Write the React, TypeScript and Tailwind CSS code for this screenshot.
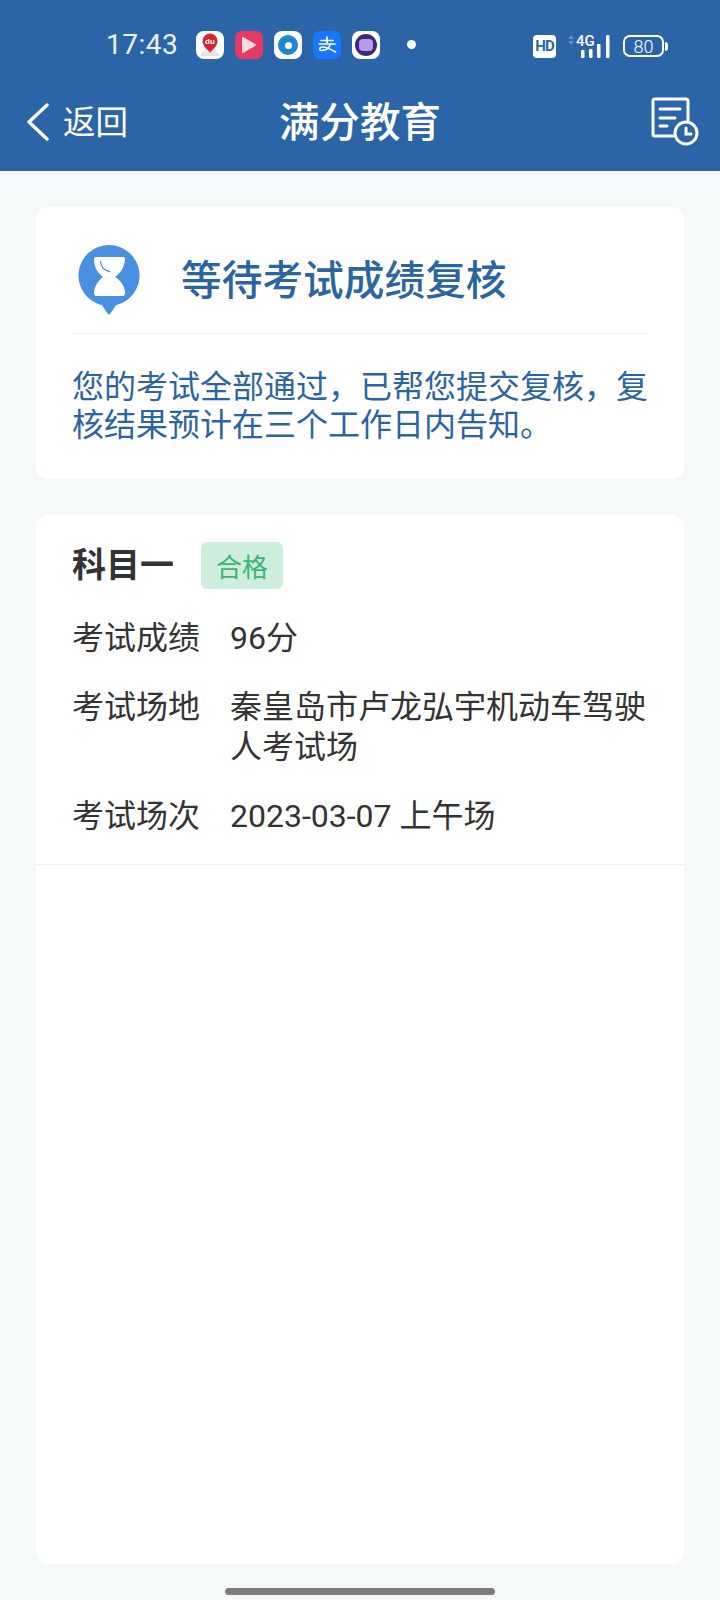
import type { ReactNode } from "react";

const font = "font-['Roboto','Noto_Sans_CJK_SC','Noto_Sans',sans-serif]";

function AppBadges() {
  return (
    <div className="flex items-center gap-[11px]">
      {/* 百度地图 */}
      <span className="flex h-[28px] w-[28px] items-center justify-center rounded-[8px] bg-white">
        <svg width="26" height="26" viewBox="0 0 26 26">
          <path d="M3 24 L10 15 L16 15 L23 24 Z" fill="#dfe6ee" />
          <path d="M13 21c-1-3-7.500-6-7.500-12a7.500 7.500 0 0 1 15 0c0 6-6.500 9-7.500 12z" fill="#d9232e" />
          <text x="13" y="12" fontSize="8" fontWeight="700" fill="#fff" textAnchor="middle" fontFamily="Liberation Sans">du</text>
        </svg>
      </span>
      {/* 视频 */}
      <span className="flex h-[28px] w-[28px] items-center justify-center rounded-[7px] bg-[#e63a62]">
        <svg width="16" height="18" viewBox="0 0 16 18">
          <path d="M2 2 L14 9 L2 16 Z" fill="#fbdbe2" stroke="#fbdbe2" strokeWidth="2" strokeLinejoin="round" />
        </svg>
      </span>
      <span className="flex h-[28px] w-[28px] items-center justify-center rounded-[8px] bg-white">
        <span className="flex h-[20px] w-[20px] items-center justify-center rounded-full bg-[#1f86cf]">
          <span className="h-[7px] w-[7px] rounded-full bg-white" />
        </span>
      </span>
      {/* 支付宝 */}
      <span className="flex h-[28px] w-[28px] items-center justify-center rounded-[7px] bg-[#1677ff]">
        <svg width="24" height="24" viewBox="0 0 24 24" fill="none" stroke="#fff" strokeWidth="1.7" strokeLinecap="round">
          <path d="M6 7.500h12" />
          <path d="M12 4v6" />
          <path d="M4 11h16" />
          <path d="M15.500 11c-1.500 4-5 6.500-9 6.500-2.500 0-2.500-3.500 1-3.500 3.500 0 8 2 13 5" />
        </svg>
      </span>
      <span className="flex h-[28px] w-[28px] items-center justify-center rounded-[8px] bg-white">
        <span className="flex h-[22px] w-[22px] items-center justify-center rounded-full bg-[#3b2a78]">
          <span className="h-[12px] w-[14px] rounded-[4px] bg-[#b79be8]" />
        </span>
      </span>
    </div>
  );
}

function StatusBar() {
  return (
    <div className="flex h-[60px] items-end pb-[1px] pl-[106px] pr-[52px] text-white">
      <span className="mb-[-3px] mr-[19px] w-[71px] text-[28px] leading-[34px] tracking-[0.5px] text-[#eaf1f8]">17:43</span>
      <AppBadges />
      <span className="mb-[10px] ml-[27px] h-[9px] w-[9px] rounded-full bg-white" />
      <div className="ml-auto flex items-center">
        <span className="flex h-[23px] w-[23px] items-center justify-center rounded-[4px] bg-white text-[15px] font-bold tracking-[-1px] text-[#2b65a8]">HD</span>
        <svg className="ml-[11px]" width="44" height="26" viewBox="0 0 44 26">
          <path d="M1 6l3-4 3 4zM1 8l3 4 3-4z" fill="#6d93c4" />
          <text x="9" y="13" fontSize="15" fontWeight="500" fill="#fff" fontFamily="Roboto">4G</text>
          <rect x="14" y="17" width="3.500" height="8" rx="1" fill="#fff" />
          <rect x="22" y="16" width="3.500" height="9" rx="1" fill="#fff" />
          <rect x="30" y="11" width="3.500" height="14" rx="1" fill="#fff" />
          <rect x="39" y="2" width="3.500" height="23" rx="1" fill="#fff" />
        </svg>
        <div className="ml-[12px] flex items-center">
          <span className="flex h-[22px] w-[41px] items-center justify-center rounded-[7px] border-2 border-white text-[18px] font-light text-white">80</span>
          <span className="ml-[1px] h-[9px] w-[3px] rounded-r bg-white" />
        </div>
      </div>
    </div>
  );
}

function RecordIcon() {
  return (
    <svg width="50" height="50" viewBox="0 0 50 50" fill="none" stroke="#fff" strokeWidth="3" strokeLinecap="round">
      <path d="M23 40H5a2 2 0 0 1-2-2V5a2 2 0 0 1 2-2h31a2 2 0 0 1 2 2v20" fill="none" />
      <path d="M10 13h20M10 22h15M10 30h7" />
      <circle cx="36" cy="37" r="11" />
      <path d="M36 32v6h5" />
    </svg>
  );
}

function NavBar() {
  return (
    <div className="relative flex h-[111px] items-center px-[26px] pt-[12px] text-white">
      <svg width="24" height="38" viewBox="0 0 24 38" fill="none" stroke="#fff" strokeWidth="3.400" strokeLinecap="round" strokeLinejoin="round">
        <path d="M21 2 L3 19 L21 36" />
      </svg>
      <span className="ml-[13px] mt-[4px] text-[32.500px] leading-none">返回</span>
      <span className="absolute left-0 right-0 top-[36px] text-center text-[40.500px] font-medium leading-[54px]">满分教育</span>
      <span className="ml-auto mr-[-6px] mt-[-2px]">
        <RecordIcon />
      </span>
    </div>
  );
}

function HourglassIcon() {
  return (
    <svg width="62" height="70" viewBox="0 0 62 70">
      <path d="M31 0a30.500 30.500 0 0 1 7 60.200l-5.500 8.300a2 2 0 0 1-3 0L24 60.200A30.500 30.500 0 0 1 31 0z" fill="#4a90e2" />
      <path d="M18 12h27c1.500 0 2 1 2 2-.5 9-5 14-10 18H25C20 28 16 23 16 14c0-1 .5-2 2-2z" fill="#fff" />
      <path d="M25 32h12c5 3 10 9 10 16 0 2-1 3-2 3H18c-1 0-2-1-2-3 0-7 5-13 9-16z" fill="#fff" />
      <path d="M22.500 16.500c.5 5 4 9 9 10" fill="none" stroke="#4a90e2" strokeWidth="1.300" strokeLinecap="round" />
    </svg>
  );
}

function InfoRow({ label, children }: { label: string; children: ReactNode }) {
  return (
    <div className="flex text-[32px] leading-[40px] text-[#333]">
      <span className="w-[158px] shrink-0">{label}</span>
      <span className="min-w-0 flex-1">{children}</span>
    </div>
  );
}

export default function App() {
  return (
    <div className={`${font} flex h-[1600px] w-[720px] flex-col bg-[#f4f8f9]`}>
      <header className="h-[171px] shrink-0 bg-[#2b65a8]">
        <StatusBar />
        <NavBar />
      </header>

      <main className="flex flex-1 flex-col px-[36px] pt-[36px]">
        {/* 复核状态 */}
        <section className="h-[272px] rounded-[12px] bg-white px-[36px]">
          <div className="flex h-[127px] items-center border-b border-[#f0f0f0] pl-[6px] pt-[14px]">
            <span className="mt-[6px]">
              <HourglassIcon />
            </span>
            <h1 className="ml-[41px] mt-[7px] text-[40.700px] font-medium leading-[54px] text-[#2b65a0]">等待考试成绩复核</h1>
          </div>
          <p className="mt-[34px] text-[32px] leading-[38px] text-[#2b65a0]">
            您的考试全部通过，已帮您提交复核，复核结果预计在三个工作日内告知。
          </p>
        </section>

        {/* 科目成绩 */}
        <section className="mt-[36px] h-[1049px] rounded-[12px] bg-white">
          <div className="flex h-[350px] flex-col border-b border-[#f2f2f2] px-[36px] pt-[26px]">
            <div className="flex items-center">
              <span className="text-[34px] font-bold leading-[48px] text-[#333]">科目一</span>
              <span className="ml-[27px] flex h-[47px] w-[82px] items-center justify-center rounded-[6px] bg-[#cdeedd] pt-[6px] text-[26px] text-[#3cb371]">合格</span>
            </div>
            <div className="mt-[29px] flex flex-col gap-[29px]">
              <InfoRow label="考试成绩">96分</InfoRow>
              <InfoRow label="考试场地">秦皇岛市卢龙弘宇机动车驾驶人考试场</InfoRow>
              <InfoRow label="考试场次">2023-03-07 上午场</InfoRow>
            </div>
          </div>
        </section>

        <div className="flex flex-1 items-end justify-center pb-[5px]">
          <span className="h-[7px] w-[270px] rounded-full bg-[#7a7d7c]" />
        </div>
      </main>
    </div>
  );
}
